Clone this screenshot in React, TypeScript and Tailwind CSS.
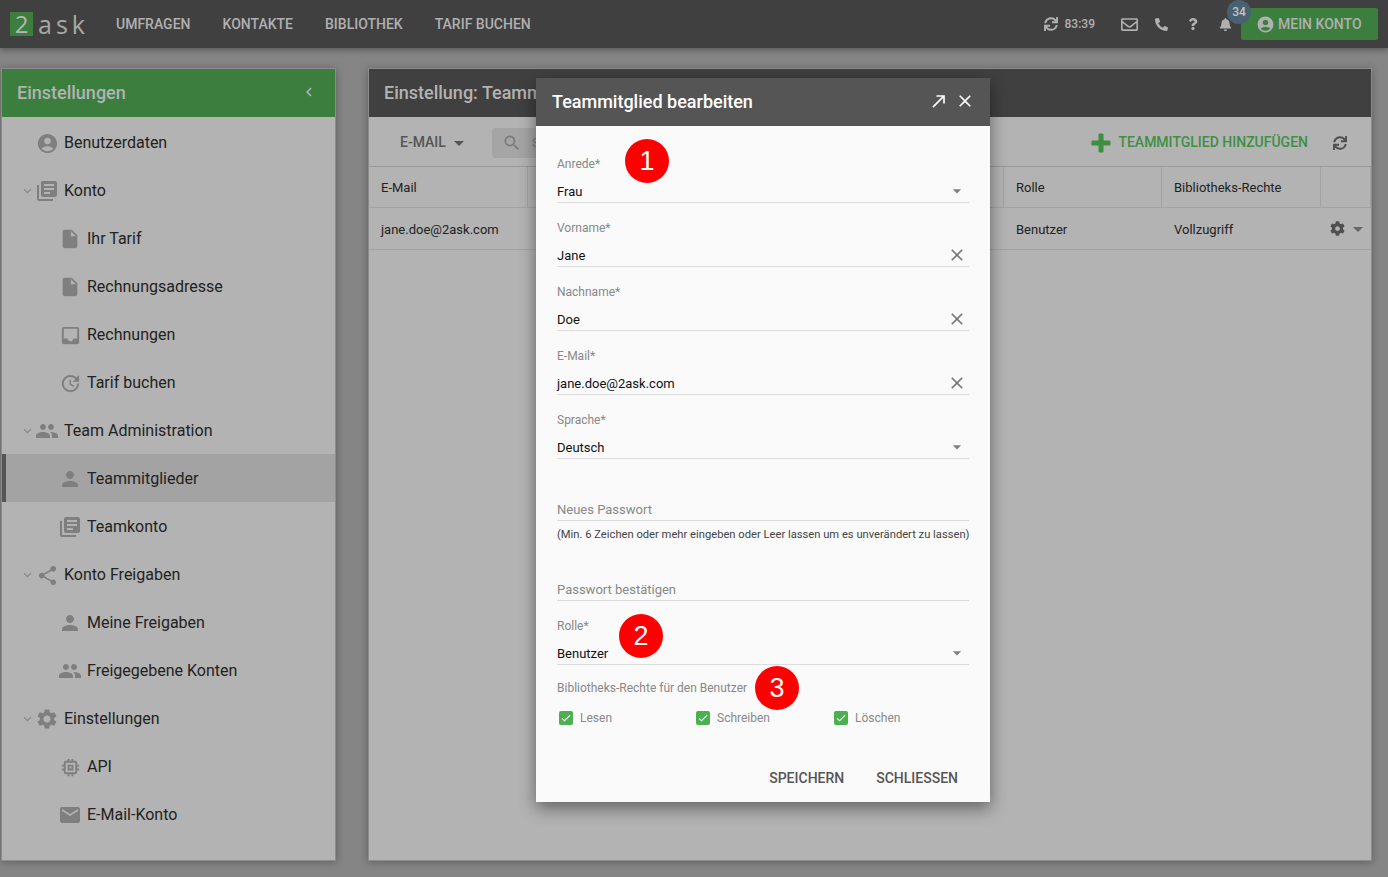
import React from 'react';
import { MdAccountCircle, MdLibraryBooks, MdInsertDriveFile, MdInbox, MdUpdate, MdPeople, MdPerson, MdShare, MdSettings, MdMemory, MdEmail, MdKeyboardArrowLeft, MdExpandMore, MdArrowDropDown, MdClose, MdCallMade, MdSearch, MdCheck } from 'react-icons/md';
import { FaSync, FaPhoneAlt, FaQuestion, FaBell, FaRegEnvelope, FaCog } from 'react-icons/fa';

type Item = { label: string; icon: React.ComponentType<{ size?: number; className?: string }>; size: number; level: 0 | 1; chevron?: boolean; active?: boolean };

const items: Item[] = [
  { label: 'Benutzerdaten', icon: MdAccountCircle, size: 23, level: 0 },
  { label: 'Konto', icon: MdLibraryBooks, size: 24, level: 0, chevron: true },
  { label: 'Ihr Tarif', icon: MdInsertDriveFile, size: 22, level: 1 },
  { label: 'Rechnungsadresse', icon: MdInsertDriveFile, size: 22, level: 1 },
  { label: 'Rechnungen', icon: MdInbox, size: 23, level: 1 },
  { label: 'Tarif buchen', icon: MdUpdate, size: 23, level: 1 },
  { label: 'Team Administration', icon: MdPeople, size: 24, level: 0, chevron: true },
  { label: 'Teammitglieder', icon: MdPerson, size: 24, level: 1, active: true },
  { label: 'Teamkonto', icon: MdLibraryBooks, size: 24, level: 1 },
  { label: 'Konto Freigaben', icon: MdShare, size: 23, level: 0, chevron: true },
  { label: 'Meine Freigaben', icon: MdPerson, size: 24, level: 1 },
  { label: 'Freigegebene Konten', icon: MdPeople, size: 24, level: 1 },
  { label: 'Einstellungen', icon: MdSettings, size: 24, level: 0, chevron: true },
  { label: 'API', icon: MdMemory, size: 23, level: 1 },
  { label: 'E-Mail-Konto', icon: MdEmail, size: 24, level: 1 },
];

function SideRow({ item }: { item: Item }) {
  const Icon = item.icon;
  return (
    <div className={`flex h-12 items-center border-l-4 pt-[2px] text-[16px] text-[#222222] ${item.active ? 'border-[#555555] bg-[#a3a3a3]' : 'border-transparent'} ${item.level === 0 ? 'pl-[14px]' : 'pl-[52px]'}`}>
      {item.level === 0 && (
        <span className="flex w-[15px] justify-center text-[#8a8a8a]">{item.chevron && <MdExpandMore size={16} />}</span>
      )}
      <span className="flex w-6 justify-center text-[#7f7f7f]"><Icon size={item.size} /></span>
      <span className="ml-[5px]">{item.label}</span>
    </div>
  );
}

function Field({ label, value, kind }: { label: string; value: string; kind: 'select' | 'clear' }) {
  return (
    <div className="h-16 pt-[17px]">
      <div className="h-4 text-[12px] leading-4 text-[#888888]">{label}</div>
      <div className="flex h-[31px] items-end justify-between border-b border-[#dddddd] pb-[2px] text-[13px] leading-4 text-[#111111]">
        <span>{value}</span>
        {kind === 'select' ? (
          <span className="mb-px mr-[2px] flex h-4 w-5 items-center justify-center text-[#808080]"><MdArrowDropDown size={24} /></span>
        ) : (
          <span className="mb-px mr-[2px] flex h-4 w-5 items-center justify-center text-[#777777]"><MdClose size={20} /></span>
        )}
      </div>
    </div>
  );
}

function Check({ label, w }: { label: string; w: string }) {
  return (
    <div className={`flex items-center ${w}`}>
      <span className="ml-[2px] flex h-[14px] w-[14px] items-center justify-center rounded-[2px] bg-[#4caf50] text-white"><MdCheck size={12} /></span>
      <span className="ml-[7px] text-[12px] leading-4 text-[#888888]">{label}</span>
    </div>
  );
}

function Marker({ n, cls }: { n: string; cls: string }) {
  return (
    <div className={`absolute flex h-11 w-11 items-center justify-center rounded-full bg-[#ff0000] font-['Liberation_Sans',sans-serif] text-[27px] leading-none text-white ${cls}`}>{n}</div>
  );
}

export default function App() {
  return (
    <div className="relative h-[877px] w-[1388px] overflow-hidden bg-[#858585] font-['Roboto',sans-serif]">
      {/* Top bar */}
      <header className="flex h-12 items-center bg-[#404040] pl-[10px] text-[14px] font-medium text-[#b0b0b0] shadow-[0_2px_6px_rgba(0,0,0,0.35)]">
        <div className="flex w-[90px] items-center">
          <span className="flex h-6 w-[23px] items-center justify-center bg-[#3b7e3e] font-['Open_Sans',sans-serif] text-[24px] font-normal text-[#b5b5b5]">2</span>
          <span className="ml-[5px] font-['Open_Sans',sans-serif] text-[25px] font-normal leading-none tracking-[4px] text-[#a8a8a8]">ask</span>
        </div>
        <nav className="flex">
          <a className="px-4">UMFRAGEN</a>
          <a className="px-4">KONTAKTE</a>
          <a className="px-4">BIBLIOTHEK</a>
          <a className="px-4">TARIF BUCHEN</a>
        </nav>
        <div className="ml-auto flex items-center pr-[10px]">
          <FaSync size={14} />
          <span className="ml-[7px] text-[12px]">83:39</span>
          <FaRegEnvelope size={17} className="ml-[26px]" />
          <FaPhoneAlt size={13} className="ml-[17px]" />
          <FaQuestion size={12} className="ml-[19px]" />
          <FaBell size={13} className="ml-[20px]" />
          <div className="relative ml-[9px] flex h-8 w-[137px] items-center rounded-[2px] bg-[#3b7e3e] pl-4">
            <MdAccountCircle size={19} className="mr-[3px] -ml-[1px]" />
            <span>MEIN KONTO</span>
            <span className="absolute -top-[8px] -left-[14px] flex h-6 w-6 items-center justify-center rounded-full bg-[#4a6172] text-[12px] text-[#c4c4c4]">34</span>
          </div>
        </div>
      </header>

      <div className="flex gap-[32px] pl-[1px] pt-[20px]">
        {/* Sidebar */}
        <aside className="h-[793px] w-[335px] border border-[#8c8c8c] bg-[#b3b3b3] shadow-[0_1px_8px_rgba(0,0,0,0.3)]">
          <div className="flex h-12 items-center justify-between bg-[#3b7e3e] pb-[2px] pl-[15px] pr-[17px] text-[18px] font-medium text-[#b3b3b3]">
            <span>Einstellungen</span>
            <MdKeyboardArrowLeft size={18} />
          </div>
          <div className="pt-px">
            {items.map((it) => <SideRow key={it.label} item={it} />)}
          </div>
        </aside>

        {/* Main */}
        <main className="h-[793px] w-[1004px] border border-[#8c8c8c] bg-[#b3b3b3] shadow-[0_1px_8px_rgba(0,0,0,0.3)]">
          <div className="flex h-12 items-center bg-[#404040] pb-[2px] pl-[15px] text-[18px] font-medium text-[#b3b3b3]">Einstellung: Teammitglieder</div>
          <div className="flex h-[50px] items-center border-b border-[#9a9a9a] pl-[31px] pr-[24px] pt-[2px] text-[14px] font-medium">
            <span className="text-[#555555]">E-MAIL</span>
            <MdArrowDropDown size={24} className="ml-px text-[#555555]" />
            <div className="ml-[21px] flex h-[30px] w-[300px] items-center rounded-[3px] bg-[#a5a5a5] pl-[10px] text-[13px] font-normal text-[#808080]">
              <MdSearch size={20} className="text-[#7a7a7a]" />
              <span className="ml-[10px]">Suchen</span>
            </div>
            <svg viewBox="0 0 20 20" width="20" height="20" className="ml-auto fill-[#3f8f43]">
              <path d="M7.5 1.5a1 1 0 0 1 1-1h3a1 1 0 0 1 1 1v6h6a1 1 0 0 1 1 1v3a1 1 0 0 1-1 1h-6v6a1 1 0 0 1-1 1h-3a1 1 0 0 1-1-1v-6h-6a1 1 0 0 1-1-1v-3a1 1 0 0 1 1-1h6z" />
            </svg>
            <span className="ml-[7px] text-[#3f8f43]">TEAMMITGLIED HINZUFÜGEN</span>
            <FaSync size={14} className="ml-[25px] text-[#4f4f4f]" />
          </div>
          <div className="grid h-[41px] grid-cols-[159px_159px_159px_158px_158px_159px_50px] border-b border-[#a3a3a3] text-[13px] text-[#222222]">
            {['E-Mail', 'Anrede', 'Vorname', 'Nachname', 'Rolle', 'Bibliotheks-Rechte', ''].map((h) => (
              <div key={h} className="flex items-center border-r border-[#a3a3a3] pl-3 pt-[2px]">{h}</div>
            ))}
          </div>
          <div className="grid h-[42px] grid-cols-[159px_159px_159px_158px_158px_159px_50px] border-b border-[#a3a3a3] text-[13px] text-[#222222]">
            {['jane.doe@2ask.com', 'Frau', 'Jane', 'Doe', 'Benutzer', 'Vollzugriff'].map((c) => (
              <div key={c} className="flex items-center pl-3 pt-[2px]">{c}</div>
            ))}
            <div className="flex items-center pl-[9px] text-[#4f4f4f]">
              <FaCog size={15} />
              <MdArrowDropDown size={24} className="ml-[1px] text-[#666666]" />
            </div>
          </div>
        </main>
      </div>

      {/* Modal */}
      <div className="absolute left-[536px] top-[78px] flex h-[724px] w-[454px] flex-col bg-[#fafafa] shadow-[0_6px_16px_rgba(0,0,0,0.45)]">
        <div className="flex h-12 shrink-0 items-center bg-[#555555] pb-[2px] pl-4 pr-[15px] text-[18px] font-medium text-white">
          <span>Teammitglied bearbeiten</span>
          <MdCallMade size={20} className="ml-auto" />
          <MdClose size={20} className="ml-[6px]" />
        </div>
        <div className="flex flex-1 flex-col px-[21px] pt-[13px]">
          <Field label="Anrede*" value="Frau" kind="select" />
          <Field label="Vorname*" value="Jane" kind="clear" />
          <Field label="Nachname*" value="Doe" kind="clear" />
          <Field label="E-Mail*" value="jane.doe@2ask.com" kind="clear" />
          <Field label="Sprache*" value="Deutsch" kind="select" />
          <div className="mt-[30px] flex h-8 items-end border-b border-[#dddddd] pb-[2px] text-[13px] leading-4 text-[#888888]">Neues Passwort</div>
          <div className="mt-[6px] h-4 whitespace-nowrap text-[11.2px] leading-4 text-[#444444]">(Min. 6 Zeichen oder mehr eingeben oder Leer lassen um es unverändert zu lassen)</div>
          <div className="mt-[26px] flex h-8 items-end border-b border-[#dddddd] pb-[2px] text-[13px] leading-4 text-[#888888]">Passwort bestätigen</div>
          <Field label="Rolle*" value="Benutzer" kind="select" />
          <div className="mt-[15px] h-4 text-[12px] leading-4 text-[#888888]">Bibliotheks-Rechte für den Benutzer</div>
          <div className="mt-[14px] flex h-4">
            <Check label="Lesen" w="w-[137px]" />
            <Check label="Schreiben" w="w-[138px]" />
            <Check label="Löschen" w="w-[130px]" />
          </div>
          <div className="mt-auto flex h-12 items-center justify-end gap-8 pr-[11px] text-[14px] font-medium text-[#555555]">
            <span>SPEICHERN</span>
            <span>SCHLIESSEN</span>
          </div>
        </div>
      </div>

      <Marker n="1" cls="left-[625px] top-[139px]" />
      <Marker n="2" cls="left-[619px] top-[614px]" />
      <Marker n="3" cls="left-[755px] top-[666px]" />
    </div>
  );
}
